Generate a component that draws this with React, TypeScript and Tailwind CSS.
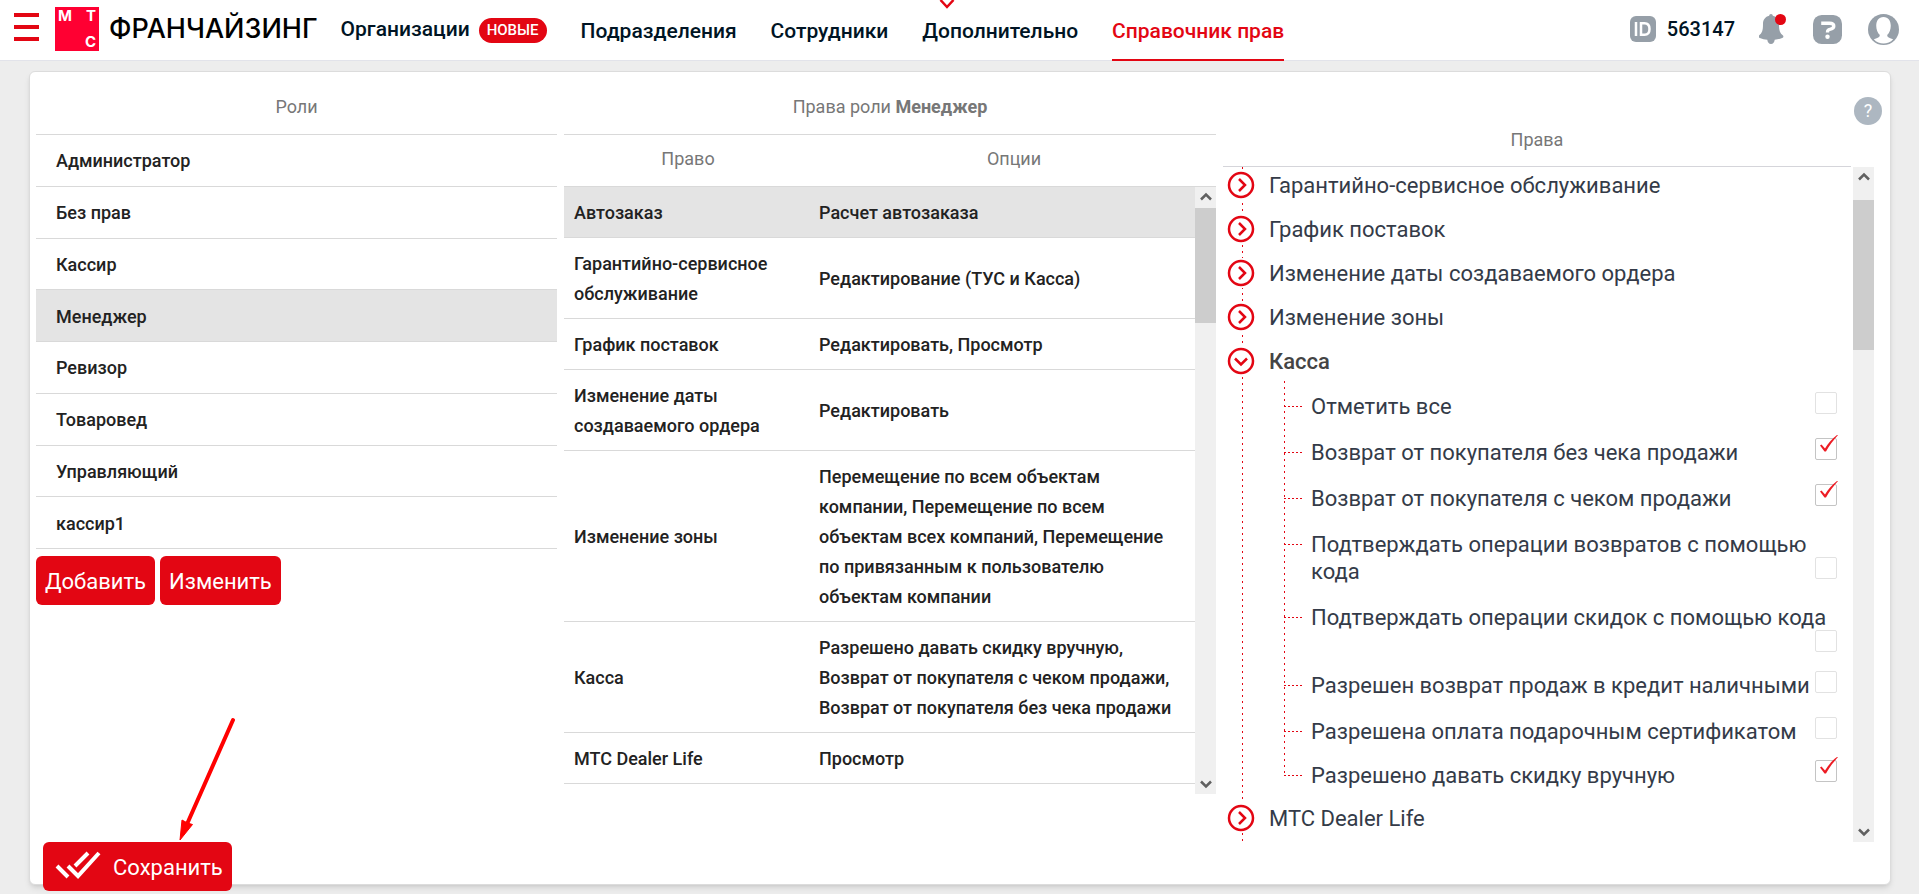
import { useState } from 'react'
import type { ReactNode } from 'react'

const roles = ['Администратор', 'Без прав', 'Кассир', 'Менеджер', 'Ревизор', 'Товаровед', 'Управляющий', 'кассир1']

const roleRights = [
  { right: 'Автозаказ', options: 'Расчет автозаказа' },
  { right: 'Гарантийно-сервисное обслуживание', options: 'Редактирование (ТУС и Касса)' },
  { right: 'График поставок', options: 'Редактировать, Просмотр' },
  { right: 'Изменение даты создаваемого ордера', options: 'Редактировать' },
  {
    right: 'Изменение зоны',
    options:
      'Перемещение по всем объектам компании, Перемещение по всем объектам всех компаний, Перемещение по привязанным к пользователю объектам компании'
  },
  {
    right: 'Касса',
    options: 'Разрешено давать скидку вручную, Возврат от покупателя с чеком продажи, Возврат от покупателя без чека продажи'
  },
  { right: 'МТС Dealer Life', options: 'Просмотр' }
]

const cashOptions = [
  { id: 'all', label: 'Отметить все', checked: false, row: 'h-[46px]', box: 'top-[11px]' },
  { id: 'no-receipt', label: 'Возврат от покупателя без чека продажи', checked: true, row: 'h-[46px]', box: 'top-[11px]' },
  { id: 'receipt', label: 'Возврат от покупателя с чеком продажи', checked: true, row: 'h-[46px]', box: 'top-[11px]' },
  { id: 'refund-code', label: 'Подтверждать операции возвратов с помощью кода', checked: false, row: 'h-[73px]', box: 'top-[38px]' },
  { id: 'discount-code', label: 'Подтверждать операции скидок с помощью кода', checked: false, row: 'h-[68px]', box: 'top-[38px]' },
  { id: 'credit', label: 'Разрешен возврат продаж в кредит наличными', checked: false, row: 'h-[46px]', box: 'top-[11px]' },
  { id: 'gift', label: 'Разрешена оплата подарочным сертификатом', checked: false, row: 'h-[44px]', box: 'top-[11px]' },
  { id: 'discount', label: 'Разрешено давать скидку вручную', checked: true, row: 'h-[46px]', box: 'top-[10px]' }
]

const navLinks = ['Подразделения', 'Сотрудники', 'Дополнительно']

function Logo() {
  return (
    <a href="#" className="mb-0.5 flex items-center gap-[10px] text-black">
      <span className="grid h-11 w-11 grid-cols-2 content-between bg-[#ff0032] px-[3px] font-['Inter',sans-serif] text-[15px] leading-[18px] font-bold text-white">
        <span className="text-left">М</span>
        <span className="text-right">Т</span>
        <span />
        <span className="text-right">С</span>
      </span>
      <span className="font-['Inter',sans-serif] text-[27px] leading-8 font-medium">ФРАНЧАЙЗИНГ</span>
    </a>
  )
}

function Header() {
  return (
    <header className="flex h-[61px] items-center border-b border-[#e2e3ea] bg-white pr-5 pl-[14px] text-[20px] font-medium text-[#001424]">
      <button type="button" aria-label="Меню" className="mr-4 mb-1.5 flex w-[25px] shrink-0 flex-col gap-2">
        <span className="h-1 bg-[#e30613]" />
        <span className="h-1 bg-[#e30613]" />
        <span className="h-1 bg-[#e30613]" />
      </button>
      <Logo />
      <nav className="ml-[23px] flex h-full items-center gap-[34px] text-[21px] whitespace-nowrap">
        <a href="#" className="flex items-center gap-[9px]">
          Организации
          <span className="rounded-full bg-[#e30613] px-2 text-[15px] leading-[25px] font-medium text-white">НОВЫЕ</span>
        </a>
        {navLinks.map((link) => (
          <a key={link} href="#" className="relative flex h-full items-center pt-1">
            {link}
            {link === 'Дополнительно' && (
              <svg className="absolute top-0 left-[17px]" width="16" height="10" viewBox="0 0 16 10" fill="none" stroke="#e30613" strokeWidth="2.5">
                <path d="M1.5 0L8 7l6.5-7" />
              </svg>
            )}
          </a>
        ))}
        <a href="#" aria-current="page" className="-mb-px flex h-[61px] items-center border-b-2 border-[#e30613] pt-1 text-[#e30613]">
          Справочник прав
        </a>
      </nav>
      <div className="ml-auto flex items-center pb-0.5">
        <svg width="26" height="26" viewBox="0 0 26 26" fill="none" stroke="#fff" strokeWidth="2.5">
          <rect width="26" height="26" rx="6" fill="#969fa8" stroke="none" />
          <path d="M6 6v14M11 7.200h3.500c3 0 5 2 5 5.800s-2 5.800-5 5.800H11z" />
        </svg>
        <span className="ml-[11px]">563147</span>
        <button type="button" aria-label="Уведомления" className="ml-6">
          <svg width="27" height="30" viewBox="1 1 27 30">
            <path d="M13 1c1 0 1.800.8 1.800 1.800 4 .9 6.200 4.200 6.200 8.200 0 7 1 9 4 11.500.8.800.3 2-.8 2.500-2.500 1-5 1.500-7.500 1.700-.3 2.500-1.500 4.300-3.700 4.300s-3.400-1.800-3.700-4.300C6.800 26.500 4.300 26 1.800 25c-1.100-.5-1.600-1.700-.8-2.500C4 20 5 18 5 11c0-4 2.200-7.300 6.200-8.200C11.200 1.800 12 1 13 1z" fill="#969fa8" />
            <circle cx="22.500" cy="6.500" r="5.500" fill="#e30613" />
          </svg>
        </button>
        <button type="button" aria-label="Помощь" className="ml-[27px]">
          <svg width="29" height="29" viewBox="0 0 30 30">
            <rect width="30" height="30" rx="9" fill="#969fa8" />
            <path d="M8.500 8.500H17c3 0 4.500 1 4.500 3s-1.500 3-4 3.300c-1.800.2-2.500.7-2.500 3.200" fill="none" stroke="#fff" strokeWidth="3.500" />
            <circle cx="15" cy="22.500" r="2.300" fill="#fff" />
          </svg>
        </button>
        <button type="button" aria-label="Профиль" className="ml-[26px]">
          <svg width="31" height="31" viewBox="0 0 32 32">
            <circle cx="16" cy="16" r="16" fill="#969fa8" />
            <path d="M16 3c-5 0-7.500 4-7.500 9 0 4 1.500 7.500 3.500 9.500.8 2-1.500 3.500-6 4.500C8.500 29 12.500 30.500 16 30.500S23.500 29 26 26c-4.500-1-6.800-2.500-6-4.500 2-2 3.500-5.500 3.500-9.500 0-5-2.500-9-7.500-9z" fill="#fff" />
          </svg>
        </button>
      </div>
    </header>
  )
}

function Heading({ children, className = '' }: { children: ReactNode; className?: string }) {
  return <h2 className={`text-center text-[18px] leading-6 text-[#777] ${className}`}>{children}</h2>
}

function RedButton({ children }: { children: ReactNode }) {
  return (
    <button type="button" className="flex h-[49px] items-center rounded-md bg-[#e30613] px-[9px] pt-px text-[22px] text-white">
      {children}
    </button>
  )
}

function ScrollBar({ offset, thumb }: { offset: string; thumb: string }) {
  return (
    <div className="flex w-[21px] shrink-0 flex-col bg-[#f0f0f0]">
      <div className={`flex justify-center pt-[5px] ${offset}`}>
        <svg width="12" height="9" viewBox="0 0 12 9" fill="none" stroke="#606060" strokeWidth="2.5">
          <path d="M1 7.500l5-5 5 5" />
        </svg>
      </div>
      <div className={`bg-[#cdcdcd] ${thumb}`} />
      <div className="mt-auto mb-[5px] flex justify-center">
        <svg width="12" height="9" viewBox="0 0 12 9" fill="none" stroke="#606060" strokeWidth="2.5">
          <path d="M1 1.500l5 5 5-5" />
        </svg>
      </div>
    </div>
  )
}

function RolesPanel() {
  const [selected, setSelected] = useState('Менеджер')

  return (
    <section className="flex w-[521px] shrink-0 flex-col">
      <Heading className="border-b border-[#d9d9d9] pt-[23px] pb-[15px]">Роли</Heading>
      <ul className="flex h-[414px] flex-col text-[18px] font-medium text-[#222]">
        {roles.map((role) => (
          <li key={role} className="flex-1 border-b border-[#d9d9d9]">
            <button
              type="button"
              onClick={() => setSelected(role)}
              className={`block h-full w-full pt-px pl-5 text-left ${role === selected ? 'bg-[#e4e4e4]' : ''}`}
            >
              {role}
            </button>
          </li>
        ))}
      </ul>
      <div className="mt-[7px] flex gap-[5px]">
        <RedButton>Добавить</RedButton>
        <RedButton>Изменить</RedButton>
      </div>
      <div className="relative mt-auto -mb-[49px] ml-[7px] flex">
        <RedButton>
          <svg className="mr-3 mb-1 ml-[3px]" width="46" height="30" viewBox="0 0 46 30" fill="none" stroke="#fff" strokeWidth="4">
            <path d="M2 16l11 11M13 16l10 10L44 3M20 16L33 3" />
          </svg>
          Сохранить
        </RedButton>
        <svg className="pointer-events-none absolute bottom-[49px] left-[134px]" width="60" height="128" viewBox="0 0 60 128">
          <path d="M56 6L10.500 109" stroke="#f00" strokeWidth="4" strokeLinecap="round" />
          <path d="M3 126l2-20 5.500 3 5 1.500z" fill="#f00" stroke="#f00" />
        </svg>
      </div>
    </section>
  )
}

function RoleRightsPanel() {
  return (
    <section className="w-[652px] shrink-0">
      <Heading className="border-b border-[#d9d9d9] pt-[23px] pb-[15px]">
        Права роли <b>Менеджер</b>
      </Heading>
      <div className="flex border-b border-[#d9d9d9] pt-[12px] pb-[15px]">
        <Heading className="w-[248px]">Право</Heading>
        <Heading className="flex-1">Опции</Heading>
      </div>
      <div className="flex h-[607px]">
        <div className="flex-1">
          <table className="w-full border-collapse text-left text-[18px] leading-[30px] font-medium text-[#222]">
            <tbody>
              {roleRights.map((row, i) => (
                <tr key={row.right} className={`border-b border-[#d9d9d9] ${i === 0 ? 'bg-[#e4e4e4]' : ''}`}>
                  <td className="w-[245px] pt-[11px] pr-9 pb-[9px] pl-[10px]">{row.right}</td>
                  <td className="pt-[11px] pr-5 pb-[9px] pl-[10px]">{row.options}</td>
                </tr>
              ))}
            </tbody>
          </table>
        </div>
        <ScrollBar offset="h-[21px]" thumb="h-[115px]" />
      </div>
    </section>
  )
}

function Node({ title, open = false }: { title: string; open?: boolean }) {
  return (
    <button type="button" aria-expanded={open} className={`flex h-11 items-center gap-[14px] text-[22px] ${open ? 'font-medium text-[#444]' : ''}`}>
      <svg className="bg-white" width="28" height="30" viewBox="0 0 28 30" fill="none" stroke="#e30613" strokeWidth="2.5">
        <circle cx="14" cy="15" r="12" />
        {open ? <path d="M8 12.500l6 6 6-6" /> : <path d="M12 9l6 6-6 6" />}
      </svg>
      {title}
    </button>
  )
}

function VerticalDots({ className }: { className: string }) {
  return (
    <span
      className={`absolute w-px bg-[repeating-linear-gradient(to_bottom,#e30613_0_2px,transparent_2px_6px)] ${className}`}
    />
  )
}

function CashOptions() {
  const [checked, setChecked] = useState(cashOptions.filter((o) => o.checked).map((o) => o.id))

  const toggle = (id: string) =>
    setChecked((prev) => (prev.includes(id) ? prev.filter((c) => c !== id) : [...prev, id]))

  return (
    <div className="relative -mt-0.5 ml-[57px] pr-6">
      <VerticalDots className="top-0 bottom-[20px] left-0" />
      <ul>
        {cashOptions.map((o) => (
          <li key={o.id} className={`relative pt-3 pl-[27px] ${o.row}`}>
            <span className="absolute top-[25px] left-0 h-px w-5 bg-[repeating-linear-gradient(to_right,#e30613_0_2px,transparent_2px_4px)]" />
            <label htmlFor={o.id} className="block text-[22px] leading-[27px]">{o.label}</label>
            <span className={`absolute -right-2 ${o.box}`}>
              <input
                id={o.id}
                type="checkbox"
                checked={checked.includes(o.id)}
                onChange={() => toggle(o.id)}
                className="peer block h-[22px] w-[22px] appearance-none rounded-[2px] border border-[#e2e2e2] bg-white checked:border-[#c4c4c4]"
              />
              <svg className="pointer-events-none absolute -top-[3px] left-[5px] hidden peer-checked:block" width="18" height="17" viewBox="0 0 18 17">
                <path d="M0 10.500L1.500 9.500l3.500 4C8 8.500 12 3.500 17 0h1C13.500 5 9 11 6 16.500H4.500z" fill="#ed1c24" />
              </svg>
            </span>
          </li>
        ))}
      </ul>
    </div>
  )
}

function RightsTree() {
  return (
    <section className="flex min-w-0 flex-1 flex-col">
      <div className="mr-[23px] border-b border-[#d5d5da] pt-[56px] pb-[14px]">
        <Heading>Права</Heading>
      </div>
      <div className="flex h-[675px]">
        <div className="relative flex-1 overflow-hidden pl-1 text-[#343b48]">
          <VerticalDots className="top-0 bottom-0 left-[19px]" />
          <div className="relative -mt-1 flex flex-col">
            <Node title="Гарантийно-сервисное обслуживание" />
            <Node title="График поставок" />
            <Node title="Изменение даты создаваемого ордера" />
            <Node title="Изменение зоны" />
            <Node title="Касса" open />
            <CashOptions />
            <Node title="МТС Dealer Life" />
          </div>
        </div>
        <ScrollBar offset="h-[33px]" thumb="h-[150px]" />
      </div>
    </section>
  )
}

export default function App() {
  return (
    <div className="flow-root min-h-screen bg-[#ededed] font-['Roboto',sans-serif]">
      <Header />
      <main className="relative mt-[10px] mr-[28px] ml-[29px] flex gap-[7px] rounded-md border border-[#dcdcdc] bg-white pr-[16px] pb-[42px] pl-[6px] shadow-md">
        <RolesPanel />
        <RoleRightsPanel />
        <RightsTree />
        <button
          type="button"
          aria-label="Справка"
          className="absolute top-[25px] right-2 h-7 w-7 rounded-full bg-[#adb7c1] text-[18px] leading-7 text-white"
        >
          ?
        </button>
      </main>
    </div>
  )
}
